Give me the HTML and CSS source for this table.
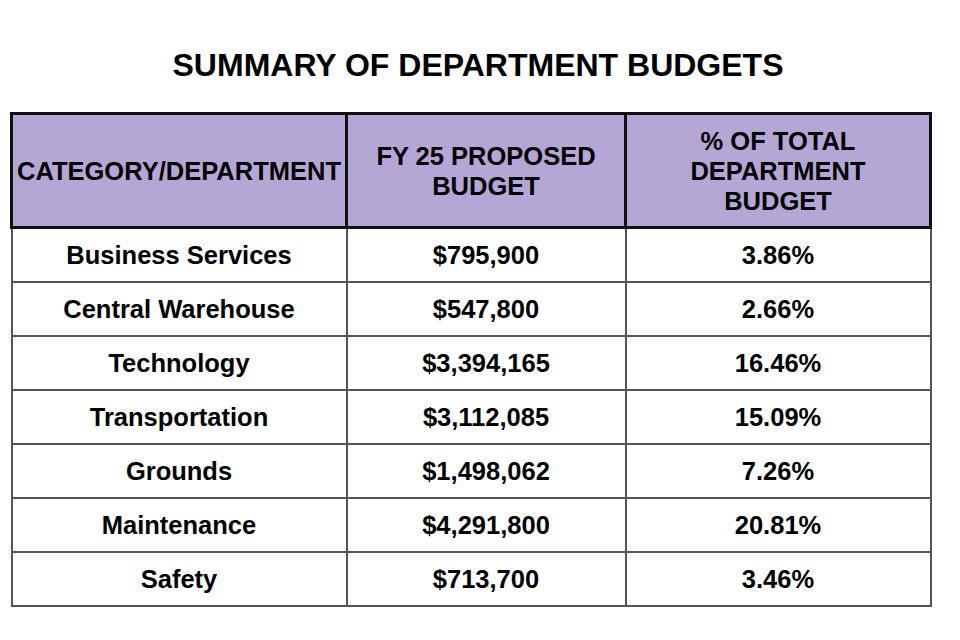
FILE: index.html
```html
<!DOCTYPE html>
<html>
<head>
<meta charset="utf-8">
<link rel="stylesheet" href="styles.css">
</head>
<body>
<h1 class="title">SUMMARY OF DEPARTMENT BUDGETS</h1>
<table class="budget">
  <colgroup>
    <col class="c1"><col class="c2"><col class="c3">
  </colgroup>
  <thead>
    <tr>
      <th>CATEGORY/DEPARTMENT</th>
      <th>FY 25 PROPOSED<br>BUDGET</th>
      <th>% OF TOTAL<br>DEPARTMENT<br>BUDGET</th>
    </tr>
  </thead>
  <tbody>
    <tr><td>Business Services</td><td>$795,900</td><td>3.86%</td></tr>
    <tr><td>Central Warehouse</td><td>$547,800</td><td>2.66%</td></tr>
    <tr><td>Technology</td><td>$3,394,165</td><td>16.46%</td></tr>
    <tr><td>Transportation</td><td>$3,112,085</td><td>15.09%</td></tr>
    <tr><td>Grounds</td><td>$1,498,062</td><td>7.26%</td></tr>
    <tr><td>Maintenance</td><td>$4,291,800</td><td>20.81%</td></tr>
    <tr><td>Safety</td><td>$713,700</td><td>3.46%</td></tr>
  </tbody>
</table>
</body>
</html>
```
FILE: styles.css
```css
html, body {
  margin: 0;
  padding: 0;
  background: #fff;
}
body {
  font-family: "Liberation Sans", Arial, sans-serif;
  color: #000;
  padding: 47px 0 0 10px;
}
.title {
  margin: 0 0 29px 0;
  width: 936px;
  text-align: center;
  font-size: 32px;
  font-weight: bold;
  line-height: 36px;
}
.budget {
  border-collapse: collapse;
  width: 919px;
  table-layout: fixed;
}
.c1 { width: 335px; }
.c2 { width: 279px; }
.c3 { width: 305px; }
.budget th {
  background: #b4a7d6;
  border: 3px solid #111;
  height: 111px;
  padding: 0;
  font-size: 25.5px;
  line-height: 30px;
  font-weight: bold;
  text-align: center;
  vertical-align: middle;
}
.budget td {
  border: 2px solid #555;
  height: 52px;
  padding: 0;
  font-size: 25.5px;
  font-weight: bold;
  text-align: center;
  vertical-align: middle;
}
.budget tbody tr:first-child td {
  border-top: 0;
}
```
